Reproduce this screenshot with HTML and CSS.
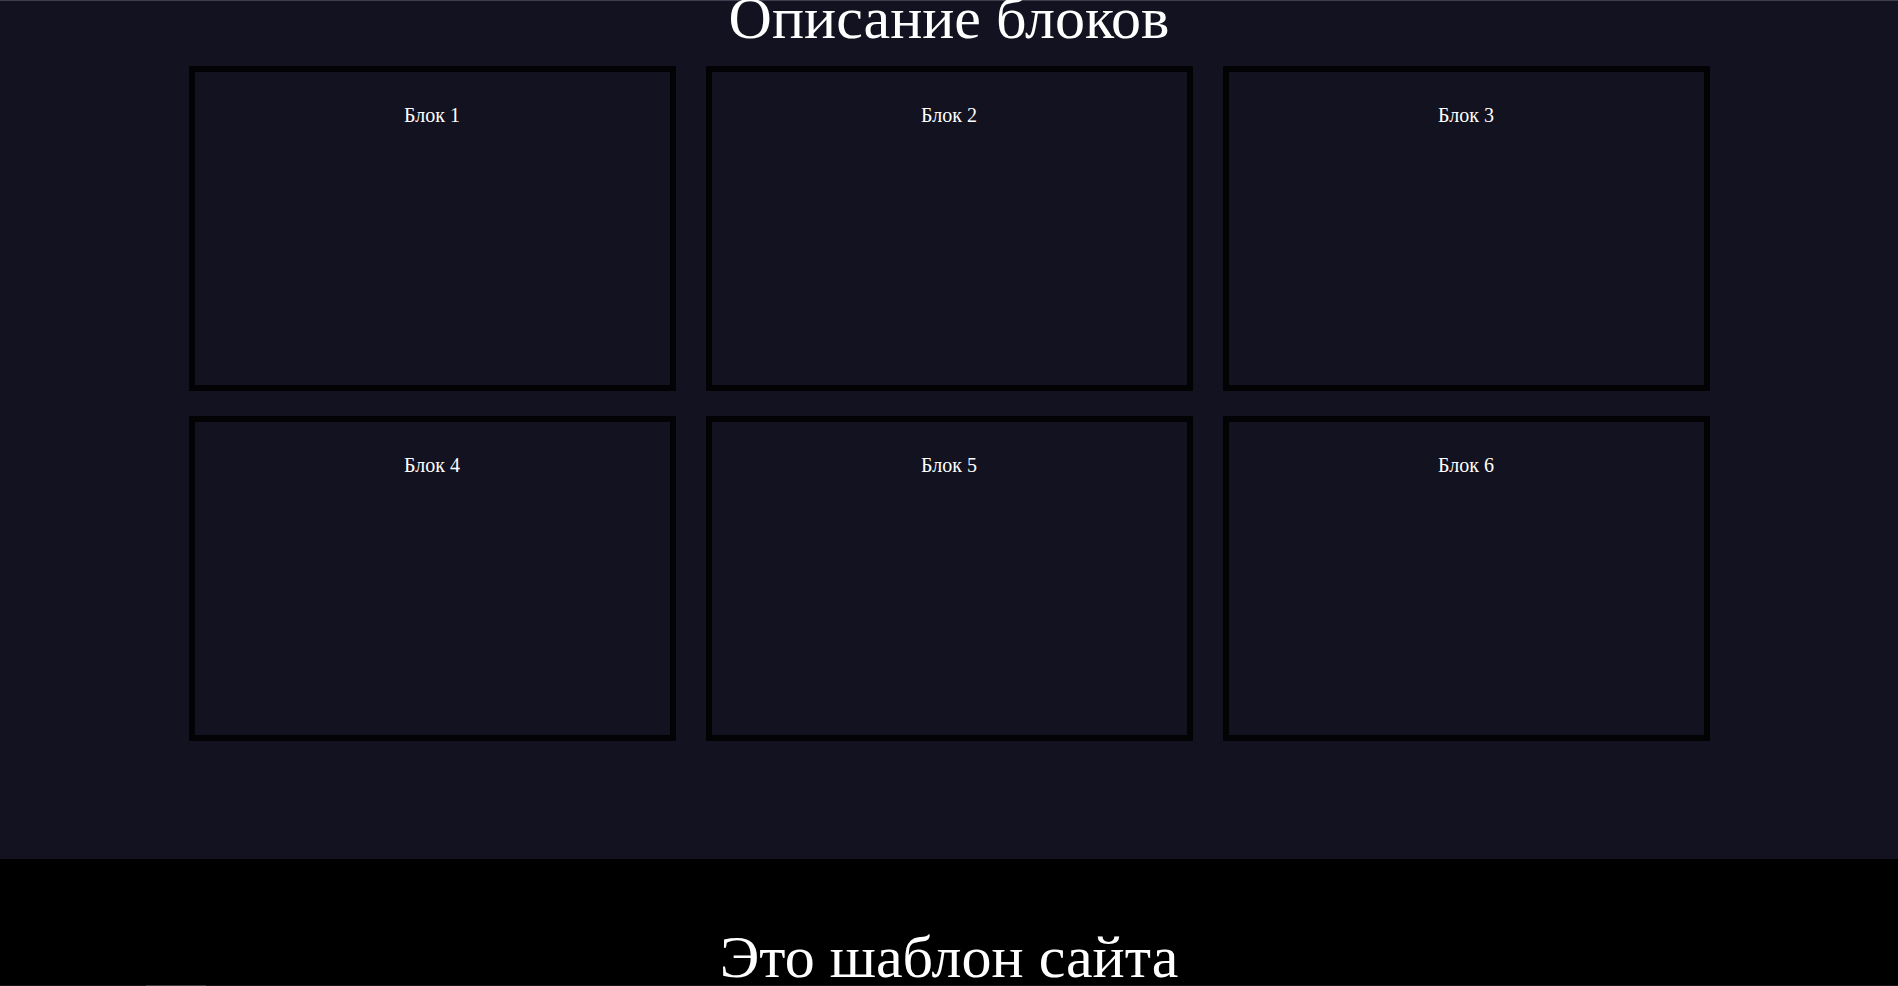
FILE: index.html
```html
<!DOCTYPE html>
<html lang="ru">
<head>
<meta charset="utf-8">
<title>Шаблон сайта</title>
<link rel="stylesheet" href="styles.css">
</head>
<body>
<div class="top-line"></div>
<section class="blocks-section">
  <h2 class="section-title">Описание блоков</h2>
  <div class="blocks-grid">
    <div class="block"><p class="block-label">Блок 1</p></div>
    <div class="block"><p class="block-label">Блок 2</p></div>
    <div class="block"><p class="block-label">Блок 3</p></div>
    <div class="block"><p class="block-label">Блок 4</p></div>
    <div class="block"><p class="block-label">Блок 5</p></div>
    <div class="block"><p class="block-label">Блок 6</p></div>
  </div>
</section>
<section class="intro-section">
  <h1 class="intro-title">Это шаблон сайта</h1>
</section>
<div class="bottom-line"><span class="bottom-line-mark"></span></div>
</body>
</html>
```

FILE: styles.css
```css
html, body {
  margin: 0;
  padding: 0;
  overflow: hidden;
}

body {
  background: #121220;
  color: #ffffff;
  font-family: "Liberation Serif", "Times New Roman", serif;
}

.top-line {
  height: 1px;
  background: #3e3e4e;
}

.blocks-section {
  padding-bottom: 118px;
}

.section-title {
  margin: -13px 0 0;
  font-size: 60px;
  line-height: 60px;
  font-weight: normal;
  text-align: center;
}

.blocks-grid {
  margin-top: 18px;
  display: grid;
  grid-template-columns: repeat(3, 487px);
  grid-auto-rows: 325px;
  column-gap: 30px;
  row-gap: 25px;
  justify-content: center;
}

.block {
  box-sizing: border-box;
  border: 6px solid #030306;
  padding-top: 32px;
  text-align: center;
}

.block-label {
  margin: 0;
  font-size: 20px;
}

.intro-section {
  background: #000000;
  height: 126px;
  padding-top: 68px;
  box-sizing: border-box;
  overflow: hidden;
}

.intro-title {
  margin: 0;
  font-size: 60px;
  line-height: 60px;
  font-weight: normal;
  text-align: center;
}

.bottom-line {
  height: 1px;
  background: #161616;
  display: flex;
}

.bottom-line-mark {
  margin-left: 146px;
  width: 60px;
  background: #3a3a3a;
}
```
